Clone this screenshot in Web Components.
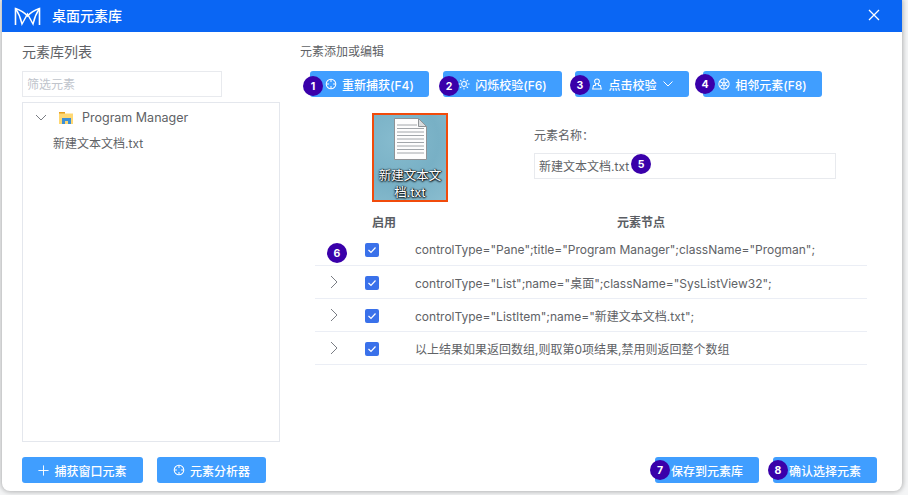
<!DOCTYPE html>
<html lang="zh"><head><meta charset="utf-8"><title>桌面元素库</title>
<style>
html,body{margin:0;height:495px;overflow:hidden;background:#f4f5f6;font-family:"Inter","Noto Sans CJK SC",sans-serif}
</style></head><body>
<el-dialog>
  <el-titlebar slot="title">桌面元素库</el-titlebar>
  <el-library slot="left"></el-library>
  <el-editor slot="right"></el-editor>
</el-dialog>
<script>
const ICONS={
 target:'<circle cx="7" cy="7" r="5.6"/><path d="M7 1.400v3.200M7 9.400v3.200M1.400 7h3.200M9.400 7h3.200"/>',
 sun:'<circle cx="7" cy="7" r="2.8"/><path d="M7 .5v2.200M7 11.300v2.200M.5 7h2.200M11.300 7h2.200M2.400 2.400l1.600 1.600M10 10l1.600 1.600M2.400 11.600l1.600-1.600M10 4l1.600-1.600"/>',
 user:'<circle cx="7" cy="4" r="2.800"/><path d="M5.400 6.500 5 8.800H3L2 12.800h10L11 8.800H9L8.600 6.500"/>',
 wheel:'<circle cx="7" cy="7" r="6"/><circle cx="7" cy="7" r="1.600"/><path d="M7 1v4.400M7 8.600V13M1.800 4l3.800 2.200M8.400 7.800 12.200 10M1.800 10l3.800-2.200M8.400 6.200 12.200 4"/>',
 plus:'<path d="M7 .5v13M.5 7h13"/>'
};
const icon=(n,w=12)=>`<svg width="${w}" height="${w}" viewBox="0 0 14 14" fill="none" stroke="currentColor" stroke-width="1.200">${ICONS[n]}</svg>`;
function def(name,html){
  customElements.define(name,class extends HTMLElement{
    connectedCallback(){
      if(this.shadowRoot)return;
      const r=this.attachShadow({mode:'open'});
      r.innerHTML=typeof html==='function'?html(this):html;
    }
  });
}
def('el-dialog',`<style>
:host{display:flex;flex-direction:column;box-sizing:border-box;width:900px;height:491px;margin-left:2px;background:#fff;border-radius:0 0 8px 8px;box-shadow:0 0 5px 1px rgba(0,0,0,.28);overflow:hidden}
.body{display:flex;flex:1;min-height:0}
</style><slot name="title"></slot><div class="body"><slot name="left"></slot><slot name="right"></slot></div>`);
def('el-titlebar',`<style>
:host{display:flex;align-items:center;height:32px;background:#0a66f4;color:#fff;font-size:14px;font-weight:500;flex:none}
svg.logo{margin-left:12px;margin-right:11px}
.t{flex:1;margin-top:-2px}
svg.x{margin-right:22px;margin-top:-3px}
</style>
<svg class="logo" width="27" height="19" viewBox="0 0 27 19" fill="none" stroke="#fff" stroke-width="1.600"><path d="M1.500 18V1.500Q9 4 13.500 9 18 4 25.500 1.500V18"/><path d="M1.500 1.500Q6 8 8 17L13.500 7 19 17Q21 8 25.500 1.500" stroke-width="1.400"/></svg>
<span class="t"><slot></slot></span>
<svg class="x" width="12" height="12" viewBox="0 0 12 12" stroke="#fff" stroke-width="1.300"><path d="M1 1l10 10M11 1 1 11"/></svg>`);
def('el-btn',h=>`<style>
:host{display:inline-flex;position:relative;align-items:center;justify-content:center;gap:5px;box-sizing:border-box;height:26px;background:#409eff;color:#fff;border-radius:3px;font-size:12px;font-weight:500;white-space:nowrap;width:${h.getAttribute('w')}px;flex:none}
svg{display:block;flex:none}
</style>${h.getAttribute('icon')?icon(h.getAttribute('icon'),+(h.getAttribute('size')||12)):''}<slot></slot><slot name="after"></slot><slot name="badge"></slot>`);
def('el-badge',`<style>
:host{position:absolute;display:flex;align-items:center;justify-content:center;width:20px;height:20px;border-radius:50%;background:#3a00aa;color:#fff;font-size:10.500px;font-weight:700}
</style><slot></slot>`);
def('el-input',h=>`<style>
:host{display:flex;align-items:center;position:relative;box-sizing:border-box;height:26px;width:${h.getAttribute('w')}px;border:1px solid #e8eaee;padding:0 0 1px 4px;font-size:12px;color:${h.hasAttribute('ph')?'#c0c4cc':'#606266'}}
</style><slot></slot>`);
def('el-library',`<style>
:host{display:flex;flex-direction:column;box-sizing:border-box;width:298px;padding:11px 0 8px 20px;flex:none}
.h{font-size:14px;color:#606266;line-height:18px;margin-bottom:10px}
.tree{flex:1;box-sizing:border-box;width:258px;border:1px solid #e4e7ed;margin-top:5px;color:#606266;font-size:12px;padding-top:1px}
.row{display:flex;align-items:center;height:26px}
.pm{font-size:12.500px}
.chev{margin-left:12px;margin-right:12px}
.folder{margin-right:9px}
.leaf{padding-left:30px;height:25px}
.foot{display:flex;gap:14px;margin-top:15px}
</style>
<div class="h">元素库列表</div>
<el-input w="200" ph>筛选元素</el-input>
<div class="tree">
 <div class="row"><svg class="chev" width="12" height="7" viewBox="0 0 12 7" fill="none" stroke="#7a7d84" stroke-width="1"><path d="M1 1l5 5 5-5"/></svg>
 <svg class="folder" width="14" height="13" viewBox="0 0 14 13"><path d="M0 1h6v2H0z" fill="#e6a020"/><path d="M0 2.500h14V13H0z" fill="#ffd873"/><path d="M3 7h9v6H3z" fill="#3d8fd6"/><path d="M6 10h3v3H6z" fill="#ffd873"/></svg>
 <span class="pm">Program Manager</span></div>
 <div class="row leaf">新建文本文档.txt</div>
</div>
<div class="foot">
 <el-btn w="121" icon="plus" size="11">捕获窗口元素</el-btn>
 <el-btn w="109" icon="target">元素分析器</el-btn>
</div>`);
def('el-thumb',`<style>
:host{display:flex;flex-direction:column;align-items:center;box-sizing:border-box;width:76px;height:89px;border:2px solid #f14b0b;background:radial-gradient(circle at 30% 30%,#86bbce,#78b0c5 55%,#8abdcf);color:#fff;font-size:12.500px;text-align:center;line-height:17px;text-shadow:0 0 2px #000,0 1px 2px #000,1px 0 1px #123;flex:none}
svg{margin-top:3px;margin-bottom:7px;display:block;flex:none}
</style>
<svg width="33" height="42" viewBox="0 0 33 42"><path d="M.5.5h24l8 8v33H.5z" fill="#fdfdfd" stroke="#8f9396"/><path d="M24.500.5v8h8z" fill="#d9dcde" stroke="#8f9396"/><path d="M3 7h20M3 10.500h27M3 14h27M3 17.500h27M3 21h27M3 24.500h27M3 28h27M3 31.500h27M3 35h27" stroke="#a2a6aa"/></svg>
<div><slot></slot></div>`);
def('el-row',h=>`<style>
:host{display:flex;align-items:center;position:relative;height:33px;box-sizing:border-box;padding-top:1px;border-bottom:1px solid #ebeef5;font-size:12px;color:#606266;white-space:nowrap}
.k{width:14px;height:14px;border-radius:2px;background:#3a71ea;display:flex;align-items:center;justify-content:center;margin-left:50px;flex:none}
.t{margin-left:36px;margin-bottom:1px}
.e{position:absolute;left:15px;top:9px}
</style>
${h.hasAttribute('exp')?'<svg class="e" width="8" height="14" viewBox="0 0 8 14" fill="none" stroke="#7a7d84"><path d="M1 1l6 6-6 6"/></svg>':''}
<span class="k"><svg width="10" height="8" viewBox="0 0 10 8" fill="none" stroke="#fff" stroke-width="1.200"><path d="M1.500 4 4 6.500 8.500 1.500"/></svg></span>
<span class="t"><slot></slot></span><slot name="badge"></slot>`);
def('el-editor',`<style>
:host{display:flex;flex-direction:column;flex:1;min-width:0;box-sizing:border-box;padding:11px 0 8px 0;position:relative}
.h{font-size:12px;color:#606266;line-height:18px;margin-bottom:10px}
.tools{display:flex;margin-left:10px;}
.tools el-btn+el-btn{margin-left:14px}
.info{display:flex;margin:16px 0 0 72px;height:89px}
.name{margin-left:86px;padding-top:15px;font-size:12px;color:#606266}
.name .l{line-height:16px;margin-bottom:9px}
.bn{left:96px;top:0}
.table{margin-left:15px;width:552px;font-size:12px;color:#606266;margin-top:8px}
.th{display:flex;height:23px;align-items:center;font-weight:700;font-size:12px;color:#5a5d63}
.th .a{margin-left:57px;width:24px}
.th .b2{margin-left:221px}
.r1{left:12px;top:10px}
.foot{margin-top:auto;display:flex;justify-content:flex-end;gap:14px;padding-right:25px}
.fb{left:-5px;top:3px}
</style>
<div class="h">元素添加或编辑</div>
<div class="tools">
 <el-btn w="119" icon="target">重新捕获(F4)<el-badge style="left:-7px;top:5px" slot="badge">1</el-badge></el-btn>
 <el-btn w="119" icon="sun">闪烁校验(F6)<el-badge style="left:-4px;top:5px" slot="badge">2</el-badge></el-btn>
 <el-btn w="114" icon="user" style="margin-left:13px">点击校验<svg slot="after" width="10" height="6" viewBox="0 0 10 6" fill="none" stroke="#fff" style="display:block;margin-left:1px"><path d="M.5.5 5 5 9.500.5"/></svg><el-badge style="left:-5px;top:4px" slot="badge">3</el-badge></el-btn>
 <el-btn w="119" icon="wheel">相邻元素(F8)<el-badge style="left:-8px;top:3px" slot="badge">4</el-badge></el-btn>
</div>
<div class="info">
 <el-thumb>新建文本文档.txt</el-thumb>
 <div class="name"><div class="l">元素名称：</div><el-input w="302">新建文本文档.txt<el-badge class="bn">5</el-badge></el-input></div>
</div>
<div class="table">
 <div class="th"><span class="a">启用</span><span class="b2">元素节点</span></div>
 <el-row>controlType="Pane";title="Program Manager";className="Progman";<el-badge class="r1" slot="badge">6</el-badge></el-row>
 <el-row exp>controlType="List";name="桌面";className="SysListView32";</el-row>
 <el-row exp>controlType="ListItem";name="新建文本文档.txt";</el-row>
 <el-row exp>以上结果如果返回数组,则取第0项结果,禁用则返回整个数组</el-row>
</div>
<div class="foot">
 <el-btn w="104">保存到元素库<el-badge class="fb" slot="badge">7</el-badge></el-btn>
 <el-btn w="104">确认选择元素<el-badge class="fb" slot="badge">8</el-badge></el-btn>
</div>`);
</script>
</body></html>
